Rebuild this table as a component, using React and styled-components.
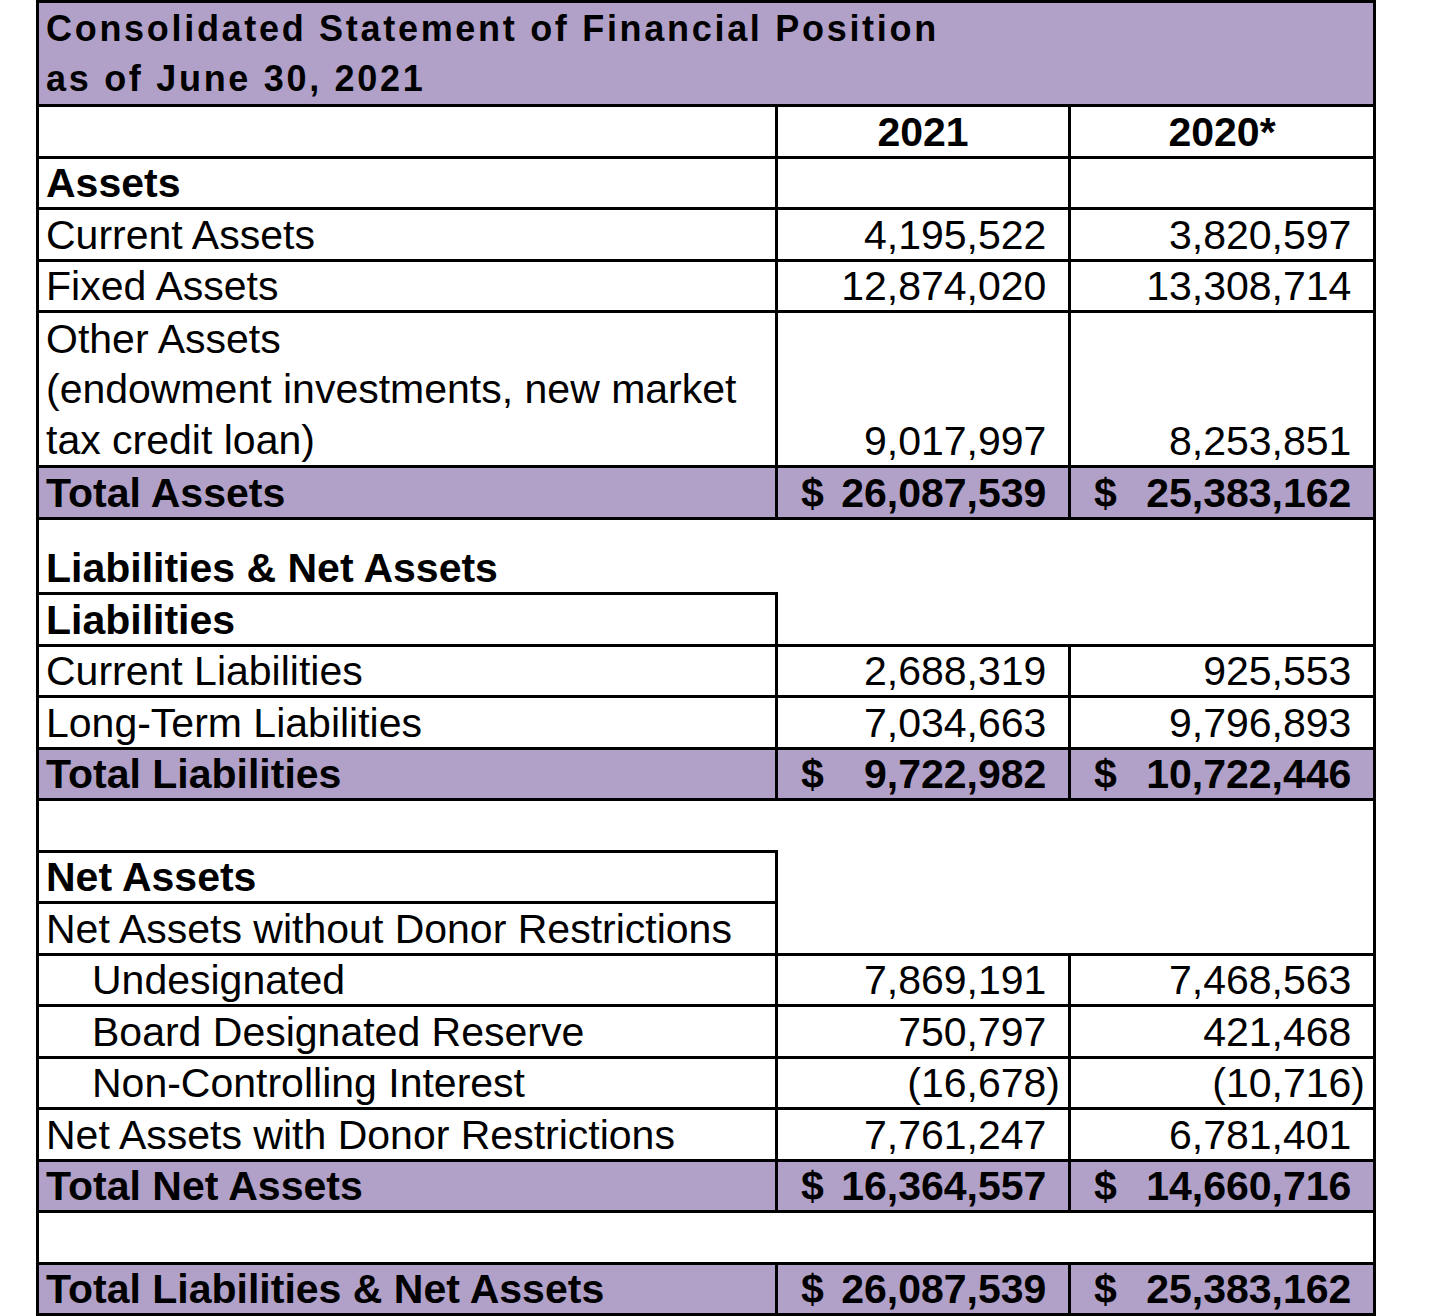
import React from 'react';
import styled, { createGlobalStyle } from 'styled-components';

const PURPLE = '#b1a0c7';
const LINE = '3px solid #000';

const GlobalStyle = createGlobalStyle`
  body {
    margin: 0;
    background: #fff;
    color: #000;
    font-family: "Liberation Sans", Arial, sans-serif;
  }
`;

const Sheet = styled.table`
  border-collapse: collapse;
  table-layout: fixed;
  width: 1337px;
  margin: 0 0 0 36px;
  font-family: "Liberation Sans", Arial, sans-serif;
  font-size: 41px;
`;

const Row = styled.tr`
  height: ${(p) => p.$h || 51.5}px;
  background: ${(p) => (p.$total ? PURPLE : '#fff')};
`;

const Cell = styled.td`
  padding: 0;
  vertical-align: bottom;
  white-space: nowrap;
  line-height: 47px;
  font-weight: ${(p) => (p.$bold ? 700 : 400)};
  border-left: ${(p) => (p.$l ? LINE : 'none')};
  border-right: ${(p) => (p.$r ? LINE : 'none')};
  border-bottom: ${(p) => (p.$b ? LINE : 'none')};
  border-top: ${(p) => (p.$t ? LINE : 'none')};
`;

const TitleCell = styled(Cell)`
  background: ${PURPLE};
  font-size: 36px;
  line-height: 50px;
  letter-spacing: 2.7px;
  padding-left: 7px;
`;

const Label = styled(Cell)`
  padding-left: ${(p) => (p.$indent ? 53 : 7)}px;
  line-height: ${(p) => (p.$multi ? '50.5px' : '47px')};
`;

const Year = styled(Cell)`
  text-align: center;
`;

const Amount = styled(Cell)`
  text-align: right;
  padding-right: 8px;
`;

const Pad = styled.span`
  visibility: hidden;
`;

const TotalBox = styled.div`
  display: flex;
  justify-content: space-between;
  padding-left: 23px;
`;

// which edges each of the three cells draws, per kind of row
const BORDERS = {
  full: [{ l: 1, r: 1, b: 1 }, { r: 1, b: 1 }, { r: 1, b: 1 }],
  section: [{ l: 1, b: 1 }, {}, { r: 1 }],
  boxOpen: [{ l: 1, r: 1, b: 1 }, { b: 1 }, { r: 1, b: 1 }],
  boxMid: [{ l: 1, r: 1, b: 1 }, {}, { r: 1 }],
  gapLine: [{ l: 1, b: 1 }, { b: 1 }, { r: 1, b: 1 }],
};

const rows = [
  { kind: 'full', label: 'Assets', bold: true },
  { kind: 'full', label: 'Current Assets', a: '4,195,522', b: '3,820,597' },
  { kind: 'full', label: 'Fixed Assets', a: '12,874,020', b: '13,308,714' },
  {
    kind: 'full',
    label: ['Other Assets', '(endowment investments, new market', 'tax credit loan)'],
    a: '9,017,997',
    b: '8,253,851',
    h: 155,
  },
  { kind: 'full', label: 'Total Assets', total: true, a: '26,087,539', b: '25,383,162' },
  { kind: 'section', label: 'Liabilities & Net Assets', bold: true, h: 75.5 },
  { kind: 'boxOpen', label: 'Liabilities', bold: true },
  { kind: 'full', label: 'Current Liabilities', a: '2,688,319', b: '925,553' },
  { kind: 'full', label: 'Long-Term Liabilities', a: '7,034,663', b: '9,796,893' },
  { kind: 'full', label: 'Total Liabilities', total: true, a: '9,722,982', b: '10,722,446' },
  { kind: 'section', label: '' },
  { kind: 'boxMid', label: 'Net Assets', bold: true },
  { kind: 'boxOpen', label: 'Net Assets without Donor Restrictions' },
  { kind: 'full', label: 'Undesignated', indent: true, a: '7,869,191', b: '7,468,563' },
  { kind: 'full', label: 'Board Designated Reserve', indent: true, a: '750,797', b: '421,468' },
  { kind: 'full', label: 'Non-Controlling Interest', indent: true, a: '(16,678)', b: '(10,716)' },
  { kind: 'full', label: 'Net Assets with Donor Restrictions', a: '7,761,247', b: '6,781,401' },
  { kind: 'full', label: 'Total Net Assets', total: true, a: '16,364,557', b: '14,660,716' },
  { kind: 'gapLine', label: '' },
  { kind: 'full', label: 'Total Liabilities & Net Assets', total: true, a: '26,087,539', b: '25,383,162' },
];

const edge = (c) => ({ $l: c.l, $r: c.r, $b: c.b });

const Value = ({ value, total, borders }) => {
  if (!value) return <Amount {...edge(borders)} />;
  if (total) {
    return (
      <Amount {...edge(borders)} $bold>
        <TotalBox>
          <span>$</span>
          <span>
            {value}
            <Pad>)</Pad>
          </span>
        </TotalBox>
      </Amount>
    );
  }
  const negative = value.startsWith('(');
  return (
    <Amount {...edge(borders)}>
      {value}
      {!negative && <Pad>)</Pad>}
    </Amount>
  );
};

const App = () => (
  <>
    <GlobalStyle />
    <Sheet>
      <colgroup>
        <col style={{ width: 739 }} />
        <col style={{ width: 293 }} />
        <col style={{ width: 305 }} />
      </colgroup>
      <tbody>
        <Row $h={104}>
          <TitleCell colSpan={3} $t $l $r $b $bold>
            Consolidated Statement of Financial Position
            <br />
            as of June 30, 2021
          </TitleCell>
        </Row>
        <Row>
          <Cell $l $r $b />
          <Year $r $b $bold>2021</Year>
          <Year $r $b $bold>2020*</Year>
        </Row>
        {rows.map((row, i) => {
          const [c1, c2, c3] = BORDERS[row.kind];
          const multi = Array.isArray(row.label);
          return (
            <Row key={i} $h={row.h} $total={row.total}>
              <Label
                {...edge(c1)}
                $bold={row.bold || row.total}
                $indent={row.indent}
                $multi={multi}
              >
                {multi
                  ? row.label.map((line, j) => (
                      <React.Fragment key={j}>
                        {j > 0 && <br />}
                        {line}
                      </React.Fragment>
                    ))
                  : row.label}
              </Label>
              <Value value={row.a} total={row.total} borders={c2} />
              <Value value={row.b} total={row.total} borders={c3} />
            </Row>
          );
        })}
      </tbody>
    </Sheet>
  </>
);

export default App;
